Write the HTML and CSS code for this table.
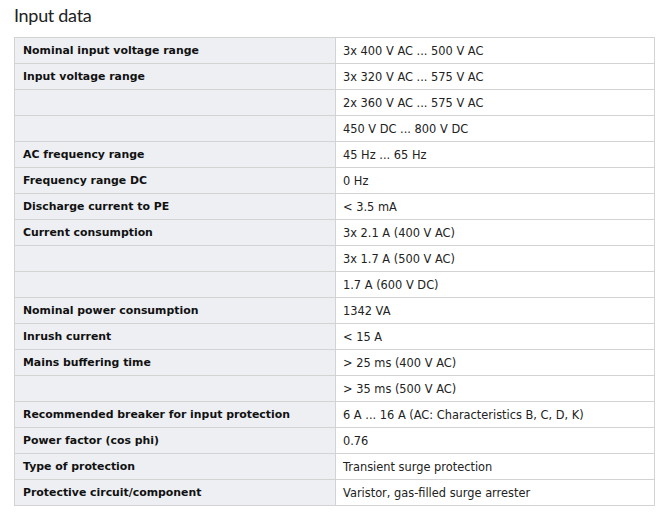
FILE: index.html
```html
<!DOCTYPE html>
<html>
<head>
<meta charset="utf-8">
<link rel="stylesheet" href="styles.css">
</head>
<body>
<h2 class="title">Input data</h2>
<table class="spec">
<tr><th>Nominal input voltage range</th><td>3x 400 V AC ... 500 V AC</td></tr>
<tr><th>Input voltage range</th><td>3x 320 V AC ... 575 V AC</td></tr>
<tr><th></th><td>2x 360 V AC ... 575 V AC</td></tr>
<tr><th></th><td>450 V DC ... 800 V DC</td></tr>
<tr><th>AC frequency range</th><td>45 Hz ... 65 Hz</td></tr>
<tr><th>Frequency range DC</th><td>0 Hz</td></tr>
<tr><th>Discharge current to PE</th><td>&lt; 3.5 mA</td></tr>
<tr><th>Current consumption</th><td>3x 2.1 A (400 V AC)</td></tr>
<tr><th></th><td>3x 1.7 A (500 V AC)</td></tr>
<tr><th></th><td>1.7 A (600 V DC)</td></tr>
<tr><th>Nominal power consumption</th><td>1342 VA</td></tr>
<tr><th>Inrush current</th><td>&lt; 15 A</td></tr>
<tr><th>Mains buffering time</th><td>&gt; 25 ms (400 V AC)</td></tr>
<tr><th></th><td>&gt; 35 ms (500 V AC)</td></tr>
<tr><th>Recommended breaker for input protection</th><td>6 A ... 16 A (AC: Characteristics B, C, D, K)</td></tr>
<tr><th>Power factor (cos phi)</th><td>0.76</td></tr>
<tr><th>Type of protection</th><td>Transient surge protection</td></tr>
<tr><th>Protective circuit/component</th><td>Varistor, gas-filled surge arrester</td></tr>
</table>
</body>
</html>
```
FILE: styles.css
```css
body {
  margin: 0;
  padding: 0 17px 0 14px;
  background: #fff;
  color: #222;
  font-family: "DejaVu Sans", Verdana, sans-serif;
}
.title {
  margin: 0;
  padding-top: 4px;
  height: 33px;
  font-family: "Lato", "Open Sans", sans-serif;
  font-weight: normal;
  font-size: 18px;
  letter-spacing: -0.3px;
  line-height: 22px;
  color: #222;
}
.spec {
  width: 641px;
  border-collapse: collapse;
  table-layout: fixed;
}
.spec th, .spec td {
  height: 25px;
  padding: 1px 8px 0;
  border: 1px solid #d3d3d3;
  text-align: left;
  vertical-align: top;
  line-height: 24px;
  white-space: nowrap;
  box-sizing: border-box;
}
.spec th {
  width: 321px;
  background: #edeff2;
  font-weight: bold;
  font-size: 10.9px;
  color: #111;
}
.spec td {
  background: #fff;
  padding-left: 7px;
  font-size: 11.4px;
}
.spec tr {
  height: 26px;
}
```
